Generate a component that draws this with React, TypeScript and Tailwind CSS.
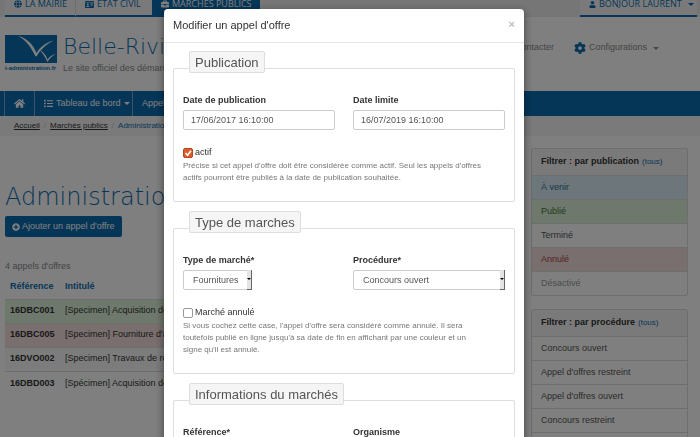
import { useState } from "react"
import type { ReactNode } from "react"
import { FaCog, FaGlobe, FaHome, FaIdCard, FaList, FaPlusCircle, FaUser, FaBriefcase } from "react-icons/fa"

type Tender = {
    ref: string,
    title: string,
    tone: string
}

const tenders: Tender[] = [
    { ref: "16DBC001", title: "[Specimen] Acquisition de matériel informatique", tone: "bg-[#dff0d8]" },
    { ref: "16DBC005", title: "[Specimen] Fourniture d'articles de bureau", tone: "bg-[#f2dede]" },
    { ref: "16DVO002", title: "[Specimen] Travaux de réfection de voirie", tone: "bg-[#f9f9f9]" },
    { ref: "16DBD003", title: "[Spécimen] Acquisition de véhicules", tone: "" },
]

const publicationFilters = [
    { label: "À venir", tone: "bg-[#d9edf7] text-[#31708f]" },
    { label: "Publié", tone: "bg-[#dff0d8] text-[#3c763d]" },
    { label: "Terminé", tone: "text-[#555]" },
    { label: "Annulé", tone: "bg-[#f2dede] text-[#a94442]" },
    { label: "Désactivé", tone: "text-[#999]" },
]

const procedureFilters = [
    { label: "Concours ouvert", tone: "text-[#555]" },
    { label: "Appel d'offres restreint", tone: "text-[#555]" },
    { label: "Appel d'offres ouvert", tone: "text-[#555]" },
    { label: "Concours restreint", tone: "text-[#555]" },
    { label: "Marché négocié", tone: "text-[#555]" },
]

const Caret = () => (
    <span className="ml-[3px] inline-block border-x-[3px] border-t-[3px] border-x-transparent align-middle" />
)

const TopBar = () => (
    <div className="flex h-[17px] items-end justify-between whitespace-nowrap bg-[#ececec] pl-[5px] pr-[3px] font-['Open_Sans',sans-serif] text-[9px] font-medium leading-4 text-[#0b6db0]">
        <nav className="flex">
            <a href="#" className="flex h-6 w-[70px] items-center gap-[3px] border-b-2 border-[#0b6db0] bg-[#f5f5f5] pl-[9px]">
                <FaGlobe className="size-2" />LA MAIRIE
            </a>
            <a href="#" className="flex h-6 w-[77px] items-center gap-[3px] border-b-2 border-l border-b-[#0b6db0] border-l-[#ddd] bg-[#f5f5f5] pl-[9px]">
                <FaIdCard className="size-[9px]" />ETAT CIVIL
            </a>
            <a href="#" className="flex h-6 w-[108px] items-center gap-[3px] border-b-2 border-[#0b6db0] bg-[#0b6db0] pl-[9px] text-white">
                <FaBriefcase className="size-2" />MARCHÉS PUBLICS
            </a>
        </nav>
        <a href="#" className="flex h-6 w-[117px] items-center gap-[3px] border-b-2 border-[#0b6db0] bg-[#f5f5f5] pl-[9px]">
            <FaUser className="size-[7px]" />BONJOUR LAURENT<Caret />
        </a>
    </div>
)

const Logo = () => (
    <div className="w-[52px] shrink-0">
        <svg viewBox="0 0 52 28" className="block h-7 w-full">
            <rect width="52" height="28" fill="#0b6db0" />
            <path d="M13 1C21 2.500 28 9 31.500 18C35 12 41 7.500 48.500 5.500C41 9.500 35.500 14.500 31.500 21.500C30.500 21.500 30 20.500 29.500 19.500C25 10.500 20 4.500 13 1Z" fill="#fff" />
            <path d="M34 14.500C38 16.500 41 20 42.500 24.500C44.500 21.500 47 20 51 19C47 21 44.500 23.500 42.500 27C41 24 38.500 18.500 34 14.500Z" fill="#fff" />
        </svg>
        <div className="whitespace-nowrap text-[6px] font-bold leading-[10px] text-[#0b6db0]">i-administration.fr</div>
    </div>
)

const SiteHeader = () => (
    <header className="flex h-[74px] justify-between pl-[5px] pr-[41px] pt-[18px]">
        <div className="flex gap-[6px]">
            <Logo />
            <div>
                <div className="font-['DejaVu_Sans_Light','DejaVu_Sans',sans-serif] text-[22px] font-extralight leading-6 text-[#0b6db0]">Belle-Rivière</div>
                <div className="mt-[3px] text-[9px] leading-3 text-[#888]">Le site officiel des démarches</div>
            </div>
        </div>
        <div className="flex h-[26px] items-center gap-5 text-[9px] text-[#888]">
            <a href="#">Nous contacter</a>
            <a href="#" className="flex items-center gap-[3px]">
                <FaCog className="size-3 text-[#0b6db0]" />Configurations<Caret />
            </a>
        </div>
    </header>
)

const MainNav = () => (
    <nav className="flex h-[25px] items-stretch bg-[#0b6db0] pl-1 text-[9px] text-white">
        <a href="#" aria-label="Accueil" className="flex w-[31px] items-center justify-center border-x border-[#7aa9cc]">
            <FaHome className="size-[11px]" />
        </a>
        <a href="#" className="flex w-[98px] items-center gap-[3px] whitespace-nowrap border-r border-[#7aa9cc] pl-[9px]">
            <FaList className="size-[9px]" /><span>Tableau de bord<Caret /></span>
        </a>
        <a href="#" className="flex items-center px-[9px]">Appels d'offres</a>
    </nav>
)

const Breadcrumb = () => (
    <nav className="flex h-5 items-center gap-1 bg-[#f5f5f5] pl-[14px] text-[8px] text-[#333]">
        <a href="#" className="underline">Accueil</a>
        <span className="text-[#bbb]">/</span>
        <a href="#" className="underline">Marchés publics</a>
        <span className="text-[#bbb]">/</span>
        <span className="text-[#0b6db0]">Administration</span>
    </nav>
)

type FilterProps = {
    title: string,
    items: { label: string, tone: string }[]
}

const FilterPanel = ({ title, items }: FilterProps) => (
    <section className="overflow-hidden rounded-xs border border-[#ddd] text-[9px]">
        <h2 className="flex h-[26px] items-center gap-[3px] bg-[#f5f5f5] pl-[9px] font-bold text-[#333]">
            {title} <a href="#" className="text-[8px] font-normal text-[#0b6db0]">(tous)</a>
        </h2>
        {items.map((item) => (
            <a key={item.label} href="#" className={`flex h-6 items-center border-t border-[#ddd] pl-[9px] ${item.tone}`}>
                {item.label}
            </a>
        ))}
    </section>
)

const TenderList = () => (
    <main className="min-w-0 flex-1 pt-[35px]">
        <h1 className="whitespace-nowrap font-['DejaVu_Sans_Light','DejaVu_Sans',sans-serif] text-[24px] font-extralight leading-7 text-[#0b6db0]">Administration</h1>
        <button className="mt-[5px] flex h-[21px] items-center gap-[2px] rounded-xs bg-[#0b6db0] px-[7px] text-[9px] text-white">
            <FaPlusCircle className="size-2" />Ajouter un appel d'offre
        </button>
        <p className="mt-[23px] text-[9px] leading-3 text-[#888]">4 appels d'offres</p>
        <table className="mt-[3px] w-full text-left text-[9px] text-[#333]">
            <thead>
                <tr className="h-6 text-[#0b6db0]">
                    <th className="w-[55px] pl-[5px]">Référence</th>
                    <th className="pl-[5px]">Intitulé</th>
                </tr>
            </thead>
            <tbody>
                {tenders.map((t) => (
                    <tr key={t.ref} className={`h-6 border-t border-[#ddd] ${t.tone}`}>
                        <th className="pl-[5px]">{t.ref}</th>
                        <td className="whitespace-nowrap pl-[5px]">{t.title}</td>
                    </tr>
                ))}
            </tbody>
        </table>
    </main>
)

const Group = ({ legend, children }: { legend: string, children: ReactNode }) => (
    <fieldset className="mb-[9px] rounded-xs border border-[#ddd] px-[9px] pb-[17px]">
        <legend className="ml-[6px] pb-3">
            <span className="block h-[22px] rounded-xs border border-[#ddd] bg-[#f5f5f5] px-[5px] text-[13px] leading-[22px] text-[#555]">{legend}</span>
        </legend>
        <div className="pt-[9px]">{children}</div>
    </fieldset>
)

const Field = ({ id, label, children }: { id: string, label: string, children: ReactNode }) => (
    <div className="min-w-0 flex-1">
        <label htmlFor={id} className="mb-1 block text-[9px] font-bold leading-3 text-[#333]">{label}</label>
        {children}
    </div>
)

const TextInput = ({ id, value }: { id: string, value: string }) => (
    <input id={id} defaultValue={value} className="block h-5 w-full rounded-xs border border-[#ccc] px-[7px] text-[9px] text-[#555] focus:outline-none" />
)

type SelectProps = {
    id: string,
    options: string[],
    wide?: boolean
}

const Select = ({ id, options, wide }: SelectProps) => (
    <div className={wide ? "relative" : "relative w-fit"}>
        <select id={id} className="block h-5 w-full appearance-none rounded-xs border border-[#ccc] bg-white pl-[9px] pr-3 pt-px text-[9px] text-[#555] focus:outline-none">
            {options.map((o) => <option key={o}>{o}</option>)}
        </select>
        <span className="pointer-events-none absolute inset-y-0 right-0 flex w-[5px] items-center justify-center border-b border-r border-[#666] bg-[#e4e4e4]">
            <span className="mb-px border-x-2 border-t-2 border-x-transparent border-t-black" />
        </span>
    </div>
)

type CheckProps = {
    id: string,
    label: string,
    help: string,
    initial: boolean
}

const Check = ({ id, label, help, initial }: CheckProps) => {
    const [ checked, setChecked ] = useState(initial)

    return (
        <div className="mt-4">
            <label htmlFor={id} className="flex h-[13px] items-center gap-[2px] text-[9px] text-[#333]">
                <span className="relative size-[10px]">
                    <input id={id} type="checkbox" checked={checked} onChange={(e) => setChecked(e.target.checked)}
                        className="block size-[10px] appearance-none rounded-xs border border-[#999] bg-white checked:border-[#a84a26] checked:bg-[#dd5a2b]"
                    />
                    {checked && (
                        <svg viewBox="0 0 10 10" className="pointer-events-none absolute inset-0">
                            <path d="M2.500 5L4.500 7.200L8 2.800" fill="none" stroke="#fff" strokeWidth="1.600" />
                        </svg>
                    )}
                </span>
                {label}
            </label>
            <p className="mt-px pr-[22px] text-[8px] leading-3 text-[#777]">{help}</p>
        </div>
    )
}

const EditTenderModal = () => (
    <div className="fixed inset-0 overflow-hidden bg-black/50 pr-3 pt-[9px]">
        <div role="dialog" aria-labelledby="modal-title" className="mx-auto max-w-[360px] rounded bg-white shadow-[0_3px_9px_rgba(0,0,0,0.5)]">
            <div className="flex h-[34px] items-center justify-between border-b border-[#e5e5e5] px-[9px]">
                <h2 id="modal-title" className="text-[11px] text-[#333]">Modifier un appel d'offre</h2>
                <button aria-label="Fermer" className="pb-[3px] text-[11px] font-bold text-[#bbb]">×</button>
            </div>
            <form className="px-[9px] pt-2">
                <Group legend="Publication">
                    <div className="flex gap-[18px]">
                        <Field id="date-publication" label="Date de publication">
                            <TextInput id="date-publication" value="17/06/2017 16:10:00" />
                        </Field>
                        <Field id="date-limite" label="Date limite">
                            <TextInput id="date-limite" value="16/07/2019 16:10:00" />
                        </Field>
                    </div>
                    <Check id="actif" label="actif" initial={true}
                        help="Précise si cet appel d'offre doit être considérée comme actif. Seul les appels d'offres actifs pourront être publiés à la date de publication souhaitée."
                    />
                </Group>
                <Group legend="Type de marches">
                    <div className="flex gap-[18px]">
                        <Field id="type" label="Type de marché*">
                            <Select id="type" options={["Fournitures", "Services", "Travaux"]} />
                        </Field>
                        <Field id="procedure" label="Procédure*">
                            <Select id="procedure" wide options={["Concours ouvert", "Concours restreint", "Appel d'offres ouvert", "Appel d'offres restreint"]} />
                        </Field>
                    </div>
                    <Check id="annule" label="Marché annulé" initial={false}
                        help="Si vous cochez cette case, l'appel d'offre sera considéré comme annulé. Il sera toutefois publié en ligne jusqu'à sa date de fin en affichant par une couleur et un signe qu'il est annulé."
                    />
                </Group>
                <Group legend="Informations du marchés">
                    <div className="flex gap-[18px]">
                        <Field id="reference" label="Référence*">
                            <TextInput id="reference" value="16DBC001" />
                        </Field>
                        <Field id="organisme" label="Organisme">
                            <TextInput id="organisme" value="" />
                        </Field>
                    </div>
                </Group>
            </form>
        </div>
    </div>
)

export default function App() {
    return (
        <div className="h-screen overflow-hidden bg-white font-['Liberation_Sans',Arial,sans-serif]">
            <TopBar />
            <SiteHeader />
            <MainNav />
            <Breadcrumb />
            <div className="flex gap-4 pl-[5px] pr-3 pt-3">
                <TenderList />
                <aside className="flex w-[157px] shrink-0 flex-col gap-[13px]">
                    <FilterPanel title="Filtrer : par publication" items={publicationFilters} />
                    <FilterPanel title="Filtrer : par procédure" items={procedureFilters} />
                </aside>
            </div>
            <EditTenderModal />
        </div>
    )
}
